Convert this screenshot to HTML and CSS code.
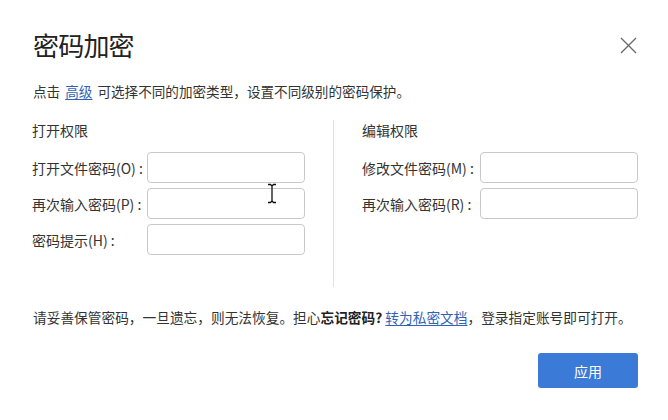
FILE: index.html
```html
<!DOCTYPE html>
<html lang="zh-CN">
<head>
<meta charset="utf-8">
<title>密码加密</title>
<link rel="stylesheet" href="styles.css">
</head>
<body>
<div class="dialog">
  <div class="header">
    <h1 class="title">密码加密</h1>
    <button class="close" aria-label="关闭">
      <svg width="17" height="17" viewBox="0 0 17 17"><path d="M1 1 L16 16 M16 1 L1 16" stroke="#6b6b6b" stroke-width="1.4" fill="none"/></svg>
    </button>
  </div>
  <p class="desc">点击<a class="link adv" href="#">高级</a>可选择不同的加密类型，设置不同级别的密码保护。</p>
  <div class="perms">
    <div class="col col-left">
      <div class="col-title">打开权限</div>
      <div class="row"><label class="lbl">打开文件密码(O) :</label><input class="inp" type="password"></div>
      <div class="row"><label class="lbl">再次输入密码(P) :</label><input class="inp" type="password"></div>
      <div class="row"><label class="lbl">密码提示(H) :</label><input class="inp" type="text"></div>
    </div>
    <div class="col col-right">
      <div class="col-title">编辑权限</div>
      <div class="row"><label class="lbl lbl-r">修改文件密码(M) :</label><input class="inp" type="password"></div>
      <div class="row"><label class="lbl lbl-r">再次输入密码(R) :</label><input class="inp" type="password"></div>
    </div>
  </div>
  <p class="note">请妥善保管密码，一旦遗忘，则无法恢复。担心<b>忘记密码?</b> <a class="link" href="#">转为私密文档</a>，登录指定账号即可打开。</p>
  <div class="footer"><button class="apply">应用</button></div>
  <svg class="cursor" width="10" height="21" viewBox="0 0 10 21"><path d="M1 1.5 H3.5 L5 3 L6.5 1.5 H9 M5 3 V18 M1 19.5 H3.5 L5 18 L6.5 19.5 H9" stroke="#111" stroke-width="1.3" fill="none"/></svg>
</div>
</body>
</html>
```
FILE: styles.css
```css
* { box-sizing: border-box; }
html, body { margin: 0; padding: 0; background: #fff; }
body {
  font-family: "Microsoft YaHei", "Noto Sans CJK SC", "Noto Sans", sans-serif;
  color: #2b2b2b;
  font-size: 14px;
}
.dialog {
  position: relative;
  width: 668px;
  height: 420px;
  padding: 28px 30px 0 33px;
}
.header {
  display: flex;
  justify-content: space-between;
  align-items: center;
  height: 34px;
}
.title {
  margin: 0;
  font-size: 26px;
  font-weight: 400;
  line-height: 34px;
  color: #222;
  letter-spacing: -0.8px;
}
.close {
  border: 0;
  background: none;
  padding: 0;
  margin-right: 1px;
  width: 17px;
  height: 17px;
  display: flex;
}
.desc {
  margin: 19px 0 0;
  line-height: 20px;
  font-size: 13.6px;
  color: #333;
}
.link {
  color: #2f63b8;
  text-decoration: underline;
  text-underline-offset: 2px;
}
.adv { margin: 0 5px; }
.perms {
  display: flex;
  margin-top: 19px;
  margin-left: -1px;
}
.col { display: flex; flex-direction: column; }
.col-left {
  width: 302px;
  border-right: 1px solid #e2e2e2;
  height: 167px;
}
.col-right { padding-left: 28px; }
.col-title {
  line-height: 20px;
  margin-bottom: 12px;
  color: #333;
}
.row {
  display: flex;
  align-items: center;
  height: 31px;
  margin-bottom: 5px;
}
.lbl {
  width: 115px;
  flex: none;
  color: #333;
  white-space: nowrap;
}
.lbl-r { width: 118px; }
.inp {
  width: 158px;
  height: 31px;
  border: 1px solid #c9c9c9;
  border-radius: 4px;
  background: #fff;
  outline: none;
  padding: 0 8px;
  font: inherit;
}
.note {
  margin: 20px 0 0;
  line-height: 20px;
  color: #333;
  font-size: 13.7px;
}
.note b { font-weight: 700; color: #222; }
.footer {
  display: flex;
  justify-content: flex-end;
  margin-top: 26px;
}
.apply {
  width: 100px;
  height: 35px;
  border: 0;
  border-radius: 3px;
  background: #3b7ad6;
  color: #fff;
  font: inherit;
  font-size: 14px;
}
.cursor {
  position: absolute;
  left: 267px;
  top: 183px;
}
```
